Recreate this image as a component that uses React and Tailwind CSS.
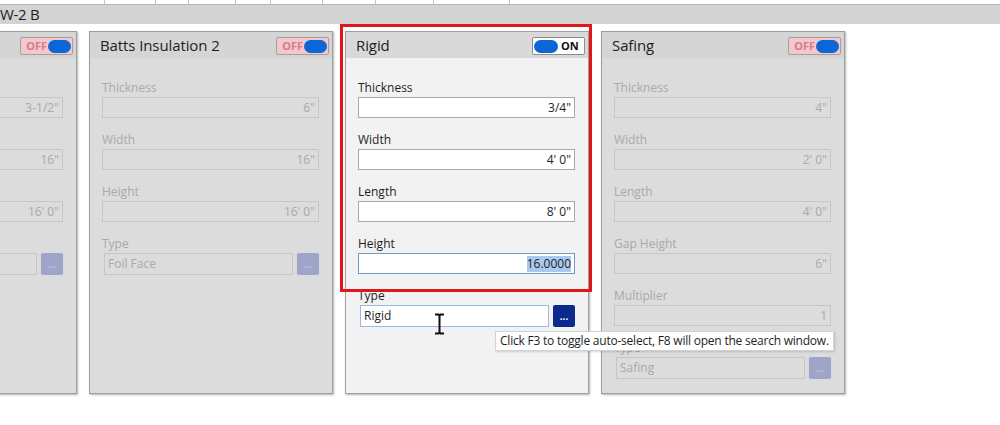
import React from "react";

function Toggle({ on }) {
  if (on) {
    return (
      <div className="w-[53px] h-[18px] border border-[#8c8c8c] rounded-[2px] bg-white flex items-center pl-[1px] mt-[2px]">
        <div className="w-[24px] h-[13px] rounded-full bg-[#0b66d6]" />
        <span className="ml-[3px] text-[11px] leading-[14px] font-bold text-[#111]">ON</span>
      </div>
    );
  }
  return (
    <div className="w-[53px] h-[18px] border border-[#a0a0a0] rounded-[2px] bg-[#f5c8cb] flex items-center justify-end pr-[1px] mt-[2px]">
      <span className="mr-[1px] text-[11px] leading-[14px] font-bold text-[#d47c88]">OFF</span>
      <div className="w-[23px] h-[13px] rounded-full bg-[#0b66d6]" />
    </div>
  );
}

function Field({ label, value, on, selected }) {
  return (
    <div className="mb-[14px]">
      <div className={`text-[12px] leading-[16px] ${on ? "text-[#1e1e1e]" : "text-[#a9a9a9]"}`}>{label}</div>
      <div
        className={`mt-[1px] h-[21px] border flex items-center justify-end pr-[3px] text-[12px] ${
          on
            ? selected
              ? "bg-white border-[#6f98cc] text-[#1e1e1e]"
              : "bg-white border-[#a9a9a9] text-[#1e1e1e]"
            : "bg-[#dcdcdc] border-[#c6c6c6] text-[#a9a9a9]"
        }`}
      >
        {selected ? <span className="bg-[#a9c9ef] leading-[16px]">{value}</span> : value}
      </div>
    </div>
  );
}

function TypeField({ value, on }) {
  return (
    <div>
      <div className={`text-[12px] leading-[16px] ${on ? "text-[#1e1e1e]" : "text-[#a9a9a9]"}`}>Type</div>
      <div className="mt-[1px] flex">
        <div
          className={`ml-[2px] flex-1 h-[22px] border flex items-center pl-[3px] text-[12px] ${
            on ? "bg-white border-[#9bb9de] text-[#1e1e1e]" : "bg-[#dcdcdc] border-[#c6c6c6] text-[#a9a9a9]"
          }`}
        >
          {value}
        </div>
        <div
          className={`ml-[4px] w-[22px] h-[22px] rounded-[2px] flex items-center justify-center text-[10px] leading-[10px] font-bold ${
            on ? "bg-[#0c2a8e] text-white" : "bg-[#9ea5c9] text-[#c2c7de]"
          }`}
        >
          ...
        </div>
      </div>
    </div>
  );
}

function Card({ title, on, fields, type, extra }) {
  return (
    <div
      className={`relative shrink-0 w-[244px] h-[363px] border border-[#9f9f9f] shadow-[1px_1px_2px_rgba(0,0,0,0.3)] flex flex-col ${
        on ? "bg-[#f2f2f2]" : "bg-[#dcdcdc]"
      }`}
    >
      <div
        className={`h-[26px] flex items-start justify-between pl-[10px] pr-[3px] ${
          on ? "bg-[#d9d9d9]" : "bg-[#d5d5d5]"
        }`}
      >
        <span className="text-[15px] leading-[26px] text-[#1e1e1e] tracking-[-0.1px]">{title}</span>
        <div className="pt-[3px]">
          <Toggle on={on} />
        </div>
      </div>
      <div className="pl-[12px] pr-[13px] pt-[22px]">
        {fields.map((f) => (
          <Field key={f[0]} label={f[0]} value={f[1]} on={on} selected={f[2]} />
        ))}
        <TypeField value={type} on={on} />
      </div>
      {extra}
    </div>
  );
}

export default function App() {
  const seps = [105, 156, 189, 236, 271, 323, 376, 434, 510];
  return (
    <div className="relative w-[1000px] h-[425px] overflow-hidden bg-white font-['Open_Sans',sans-serif]">
      <div className="h-[5px] flex border-b border-[#b4b4b4]">
        {seps.map((x, i) => (
          <div
            key={x}
            className="h-full border-r border-[#c4c4c4]"
            style={{ width: i === 0 ? x : x - seps[i - 1] }}
          />
        ))}
      </div>
      <div className="h-[19px] bg-[#d3d3d3] text-[15px] leading-[19px] text-[#1e1e1e] tracking-[-0.3px]">W-2 B</div>
      <div className="flex gap-[12px] ml-[-167px] mt-[7px]">
        <Card
          title="Batts Insulation"
          on={false}
          fields={[
            ["Thickness", '3-1/2"'],
            ["Width", '16"'],
            ["Height", "16' 0\""],
          ]}
          type="Kraft Face"
        />
        <Card
          title="Batts Insulation 2"
          on={false}
          fields={[
            ["Thickness", '6"'],
            ["Width", '16"'],
            ["Height", "16' 0\""],
          ]}
          type="Foil Face"
        />
        <Card
          title="Rigid"
          on={true}
          fields={[
            ["Thickness", '3/4"'],
            ["Width", "4' 0\""],
            ["Length", "8' 0\""],
            ["Height", "16.0000", true],
          ]}
          type="Rigid"
          extra={
            <div className="absolute left-[-6px] top-[-8px] w-[252px] h-[268px] border-[3px] border-[#e0161b] pointer-events-none" />
          }
        />
        <Card
          title="Safing"
          on={false}
          fields={[
            ["Thickness", '4"'],
            ["Width", "2' 0\""],
            ["Length", "4' 0\""],
            ["Gap Height", '6"'],
            ["Multiplier", "1"],
          ]}
          type="Safing"
        />
      </div>
      <svg className="absolute left-[434px] top-[313px]" width="11" height="22" viewBox="0 0 11 22">
        <path d="M1 1.5h3.5L5.5 3l1-1.5H10M5.5 3v16M1 20.5h3.5L5.5 19l1 1.5H10" fill="none" stroke="#111" strokeWidth="2" />
      </svg>
      <div className="absolute left-[495px] top-[331px] h-[20px] px-[4px] bg-white border border-[#d2d2d2] shadow-[1px_1px_2px_rgba(0,0,0,0.15)] text-[12px] leading-[18px] text-[#1e1e1e] whitespace-nowrap tracking-[-0.22px]">
        Click F3 to toggle auto-select, F8 will open the search window.
      </div>
    </div>
  );
}
